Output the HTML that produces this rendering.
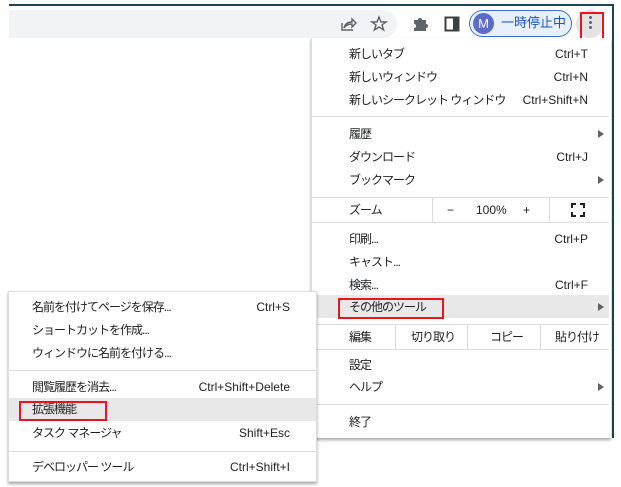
<!DOCTYPE html>
<html><head><meta charset="utf-8"><style>
*{margin:0;padding:0;box-sizing:border-box}
body{width:621px;height:487px;background:#fff;position:relative;overflow:hidden;font-family:"Liberation Sans","Noto Sans CJK JP",sans-serif;font-size:12px;color:#202124}
.a{position:absolute}
.t{position:absolute;white-space:nowrap;line-height:14px}
.k{letter-spacing:-1px}
.r{position:absolute;white-space:nowrap;line-height:14px;text-align:right}
.sep{position:absolute;height:1px;background:#dadce0}
.arr{position:absolute;width:0;height:0;border-left:6px solid #5f6368;border-top:4px solid transparent;border-bottom:4px solid transparent}
.red{position:absolute;border:2px solid #e8151c}
</style></head><body>
<div class="a" style="left:9px;top:4px;width:605px;height:2px;background:#1b4656"></div>
<div class="a" style="left:612px;top:4px;width:2px;height:434px;background:#1b4656"></div>
<div class="a" style="left:9px;top:10px;width:388px;height:28px;background:#f1f3f4;border-radius:0 14px 14px 0"></div>
<svg class="a" style="left:339px;top:15px" width="18" height="18" viewBox="0 0 18 18" fill="none" stroke="#5f6368" stroke-width="1.4"><path d="M3 8v7h11"/><path d="M5 13c1-4 4-6 8-6V4l4 4-4 4V9c-3 0-6 1-8 4z"/></svg>
<svg class="a" style="left:370px;top:15px" width="18" height="18" viewBox="0 0 18 18" fill="none" stroke="#5f6368" stroke-width="1.4"><path d="M9 2l2 5h5l-4 3 1.6 5L9 12l-4.6 3L6 10 2 7h5z"/></svg>
<svg class="a" style="left:411px;top:15px" width="18" height="18" viewBox="0 0 18 18" fill="#5f6368"><path d="M3 5h4a2 2 0 1 1 4 0h4v4a2 2 0 1 1 0 4v3H3v-3a2 2 0 1 0 0-4z"/></svg>
<svg class="a" style="left:444px;top:16px" width="16" height="16" viewBox="0 0 16 16"><rect x="1.5" y="1.5" width="13" height="13" fill="none" stroke="#3c4043" stroke-width="2"/><rect x="9" y="2" width="5" height="12" fill="#3c4043"/></svg>
<div class="a" style="left:469px;top:10px;width:103px;height:27px;border:1.5px solid #3b6fd8;border-radius:14px;background:#e8f0fe"></div>
<div class="a" style="left:473px;top:13px;width:21px;height:21px;border-radius:50%;background:#5a6bc8;color:#fff;font-size:13px;line-height:21px;text-align:center">M</div>
<div class="t" style="left:501px;top:16px;color:#1a55c4;font-size:13px">一時停止中</div>
<div class="a" style="left:576px;top:10px;width:28px;height:28px;border-radius:50%;background:#e3e3e3"></div>
<div class="a" style="left:589px;top:16px;width:3px;height:3px;border-radius:50%;background:#5f6368;box-shadow:0 5px 0 #5f6368,0 10px 0 #5f6368"></div>
<div class="red" style="left:580px;top:12px;width:24px;height:29px"></div>

<div class="a" style="left:311px;top:38px;width:300px;height:400px;background:#fff;border-left:1px solid #ddd;box-shadow:0 2px 3px rgba(0,0,0,.35)"></div>
<div class="t k" style="left:349px;top:47px">新しいタブ</div><div class="r" style="right:33px;top:47px">Ctrl+T</div>
<div class="t k" style="left:349px;top:70px">新しいウィンドウ</div><div class="r" style="right:33px;top:70px">Ctrl+N</div>
<div class="t k" style="left:349px;top:93px">新しいシークレット ウィンドウ</div><div class="r" style="right:33px;top:93px">Ctrl+Shift+N</div>
<div class="sep" style="left:312px;top:116px;width:297px"></div>
<div class="t k" style="left:349px;top:127px">履歴</div><div class="arr" style="left:598px;top:130px"></div>
<div class="t k" style="left:349px;top:150px">ダウンロード</div><div class="r" style="right:33px;top:150px">Ctrl+J</div>
<div class="t k" style="left:349px;top:173px">ブックマーク</div><div class="arr" style="left:598px;top:176px"></div>
<div class="sep" style="left:312px;top:197px;width:297px"></div>
<div class="t k" style="left:349px;top:203px">ズーム</div>
<div class="a" style="left:432px;top:197px;width:1px;height:25px;background:#dadce0"></div>
<div class="a" style="left:549px;top:197px;width:1px;height:25px;background:#dadce0"></div>
<div class="t" style="left:447px;top:203px">−</div><div class="t" style="left:476px;top:203px">100%</div><div class="t" style="left:523px;top:203px">+</div>
<svg class="a" style="left:571px;top:203px" width="14" height="14" viewBox="0 0 14 14" fill="none" stroke="#202124" stroke-width="2"><path d="M1 5V1h4M9 1h4v4M13 9v4H9M5 13H1V9"/></svg>
<div class="sep" style="left:312px;top:222px;width:297px"></div>
<div class="t k" style="left:349px;top:232px">印刷...</div><div class="r" style="right:33px;top:232px">Ctrl+P</div>
<div class="t k" style="left:349px;top:255px">キャスト...</div>
<div class="t k" style="left:349px;top:278px">検索...</div><div class="r" style="right:33px;top:278px">Ctrl+F</div>
<div class="a" style="left:312px;top:295px;width:297px;height:23px;background:#e8e8e8"></div>
<div class="t k" style="left:349px;top:300px">その他のツール</div><div class="arr" style="left:598px;top:303px"></div>
<div class="red" style="left:338px;top:298px;width:106px;height:21px"></div>
<div class="sep" style="left:312px;top:324px;width:297px"></div>
<div class="t k" style="left:349px;top:330px">編集</div>
<div class="a" style="left:395px;top:324px;width:1px;height:25px;background:#dadce0"></div>
<div class="a" style="left:467px;top:324px;width:1px;height:25px;background:#dadce0"></div>
<div class="a" style="left:540px;top:324px;width:1px;height:25px;background:#dadce0"></div>
<div class="t k" style="left:411px;top:330px">切り取り</div><div class="t k" style="left:490px;top:330px">コピー</div><div class="t k" style="left:555px;top:330px">貼り付け</div>
<div class="sep" style="left:312px;top:349px;width:297px"></div>
<div class="t k" style="left:349px;top:358px">設定</div>
<div class="t k" style="left:349px;top:380px">ヘルプ</div><div class="arr" style="left:598px;top:383px"></div>
<div class="sep" style="left:312px;top:404px;width:297px"></div>
<div class="t k" style="left:349px;top:415px">終了</div>

<div class="a" style="left:8px;top:291px;width:309px;height:191px;background:#fff;border:1px solid #ddd;box-shadow:0 2px 3px rgba(0,0,0,.35)"></div>
<div class="t k" style="left:32px;top:300px">名前を付けてページを保存...</div><div class="r" style="right:331px;top:300px">Ctrl+S</div>
<div class="t k" style="left:32px;top:323px">ショートカットを作成...</div>
<div class="t k" style="left:32px;top:346px">ウィンドウに名前を付ける...</div>
<div class="sep" style="left:9px;top:370px;width:307px"></div>
<div class="t k" style="left:32px;top:380px">閲覧履歴を消去...</div><div class="r" style="right:331px;top:380px">Ctrl+Shift+Delete</div>
<div class="a" style="left:9px;top:398px;width:307px;height:23px;background:#e8e8e8"></div>
<div class="t k" style="left:32px;top:402px">拡張機能</div>
<div class="red" style="left:19px;top:401px;width:88px;height:20px"></div>
<div class="t k" style="left:32px;top:426px">タスク マネージャ</div><div class="r" style="right:331px;top:426px">Shift+Esc</div>
<div class="sep" style="left:9px;top:451px;width:307px"></div>
<div class="t k" style="left:32px;top:460px">デベロッパー ツール</div><div class="r" style="right:331px;top:460px">Ctrl+Shift+I</div>
</body></html>
